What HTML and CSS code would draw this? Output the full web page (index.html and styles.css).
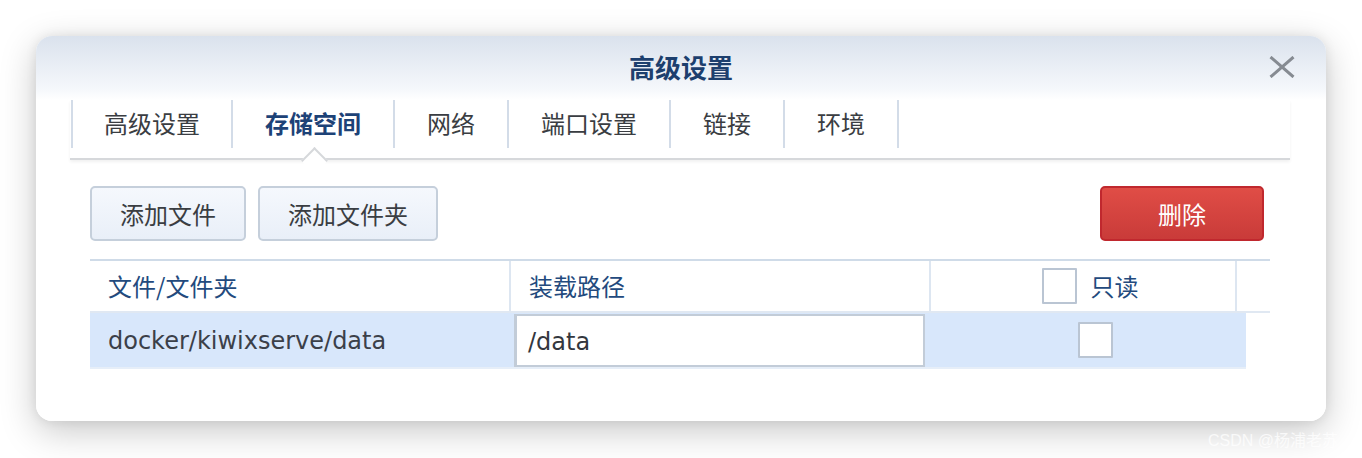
FILE: index.html
```html
<!DOCTYPE html>
<html lang="zh-CN">
<head>
<meta charset="utf-8">
<title>高级设置</title>
<link rel="stylesheet" href="styles.css">
</head>
<body>
<div class="page">
  <div class="dialog">
    <div class="dialog-head">
      <div class="dialog-title">高级设置</div>
      <button class="close" aria-label="关闭">
        <svg width="26" height="22" viewBox="0 0 26 22"><path d="M1.5 1L24.5 21M24.5 1L1.5 21" stroke="#868b92" stroke-width="3" fill="none"/></svg>
      </button>
    </div>
    <div class="tabbar">
      <div class="tab">高级设置</div>
      <div class="tab active">存储空间</div>
      <div class="tab">网络</div>
      <div class="tab">端口设置</div>
      <div class="tab">链接</div>
      <div class="tab">环境</div>
    </div>
    <div class="content">
      <div class="toolbar">
        <button class="btn">添加文件</button>
        <button class="btn">添加文件夹</button>
        <span class="spacer"></span>
        <button class="btn btn-danger">删除</button>
      </div>
      <div class="grid">
        <div class="grid-head">
          <div class="th">文件/文件夹</div>
          <div class="th">装载路径</div>
          <div class="th th-center"><span class="checkbox"></span><span>只读</span></div>
          <div class="th th-last"></div>
        </div>
        <div class="grid-row">
          <div class="td latin">docker/kiwixserve/data</div>
          <div class="td td-input"><div class="input latin">/data</div></div>
          <div class="td td-center"><span class="checkbox"></span></div>
        </div>
      </div>
    </div>
  </div>
  <div class="watermark">CSDN @杨浦老苏</div>
</div>
</body>
</html>
```

FILE: styles.css
```css
* { box-sizing: border-box; }

html, body {
  margin: 0;
  padding: 0;
  background: #ffffff;
}

body {
  font-family: "Noto Sans CJK SC", "Noto Sans", sans-serif;
  color: #333;
}

.page {
  position: relative;
  width: 1362px;
  height: 458px;
  padding: 36px 0 0 36px;
}

.dialog {
  width: 1290px;
  height: 385px;
  border-radius: 16px;
  background: linear-gradient(to bottom, #dae2ed 0px, #f4f7fb 52px, #ffffff 64px, #ffffff 100%);
  box-shadow: 0 10px 36px rgba(0, 0, 0, 0.22), 0 0 12px rgba(0, 0, 0, 0.08);
  display: flex;
  flex-direction: column;
}

.dialog-head {
  position: relative;
  height: 64px;
  display: flex;
  align-items: center;
  justify-content: center;
}

.dialog-title {
  font-size: 26px;
  font-weight: 700;
  color: #1d3f6e;
  line-height: 1;
  margin-top: -3px;
}

.close {
  position: absolute;
  right: 31px;
  top: 20px;
  width: 26px;
  height: 22px;
  padding: 0;
  border: 0;
  background: none;
  display: block;
}
.close svg { display: block; }

.tabbar {
  position: relative;
  margin: 0 36px 0 34px;
  padding-left: 1px;
  height: 60px;
  display: flex;
  align-items: flex-start;
  border-bottom: 2px solid #d6d8db;
  box-shadow: 0 2px 3px rgba(0, 0, 0, 0.06);
}

.tab {
  position: relative;
  height: 48px;
  padding: 0 32px 3px;
  display: flex;
  align-items: center;
  font-size: 24px;
  color: #3a3d42;
  border-right: 2px solid #d3dce8;
  line-height: 1;
}
.tab:first-child {
  border-left: 2px solid #d3dce8;
  padding-left: 31px;
  padding-right: 31px;
}

.tab.active {
  font-weight: 700;
  color: #1d4277;
}
.tab.active::after {
  content: "";
  position: absolute;
  left: 50%;
  top: calc(100% + 3px);
  width: 17px;
  height: 17px;
  margin-left: -8px;
  background: #ffffff;
  border-top: 2px solid #d6d8db;
  border-left: 2px solid #d6d8db;
  transform: rotate(45deg);
}

.content {
  padding: 26px 56px 0 54px;
}

.toolbar {
  display: flex;
  align-items: center;
  gap: 12px;
}
.spacer { flex: 1; }

.btn {
  height: 55px;
  padding: 0 28px;
  font-family: "Noto Sans CJK SC", "Noto Sans", sans-serif;
  font-size: 24px;
  color: #3a3d42;
  background: linear-gradient(to bottom, #f5f8fd, #e9eff8);
  border: 2px solid #c5cfdb;
  border-radius: 5px;
  line-height: 1;
}

.btn-danger {
  width: 164px;
  margin-right: 6px;
  color: #ffffff;
  background: linear-gradient(to bottom, #e04d46, #c93b39);
  border-color: #c0282e;
}

.grid {
  margin-top: 18px;
}

.grid-head {
  display: grid;
  grid-template-columns: 421px 420px 306px 33px;
  height: 54px;
  border-top: 2px solid #cfdbe8;
  border-bottom: 2px solid #e0e8f2;
}

.th {
  display: flex;
  align-items: center;
  padding-left: 18px;
  font-size: 24px;
  color: #234a7d;
  border-right: 2px solid #dde6f1;
  line-height: 1;
}
.th-center {
  justify-content: center;
  padding-left: 14px;
  gap: 14px;
}
.th-last { border-right: 0; }

.checkbox {
  display: inline-block;
  width: 35px;
  height: 36px;
  background: #ffffff;
  border: 2px solid #bac5d3;
  border-radius: 1px;
}

.grid-row {
  display: grid;
  grid-template-columns: 421px 414px 321px;
  height: 56px;
  background: #d8e7fb;
  border-bottom: 2px solid #e6eef8;
  width: 1156px;
}

.td {
  display: flex;
  align-items: center;
  padding-left: 18px;
  font-size: 24px;
  color: #3b4049;
  line-height: 1;
}

.latin {
  font-family: "DejaVu Sans", "Noto Sans CJK SC", sans-serif;
  font-size: 24px;
  padding-top: 2px;
}

.td-input {
  padding: 1px 0 0 3px;
  align-items: flex-start;
}
.input {
  width: 411px;
  height: 53px;
  background: #ffffff;
  border: 2px solid #c2ccd8;
  border-left-width: 3px;
  display: flex;
  align-items: center;
  padding-left: 11px;
  color: #33373e;
}

.td-center {
  justify-content: center;
  padding-left: 0;
  padding-right: 0;
}
.td-center .checkbox { margin-left: 20px; }

.watermark {
  position: absolute;
  left: 1208px;
  top: 427px;
  font-size: 16px;
  color: rgba(255, 255, 255, 0.75);
  font-family: "Liberation Sans", "Noto Sans CJK SC", sans-serif;
  white-space: nowrap;
}
```
